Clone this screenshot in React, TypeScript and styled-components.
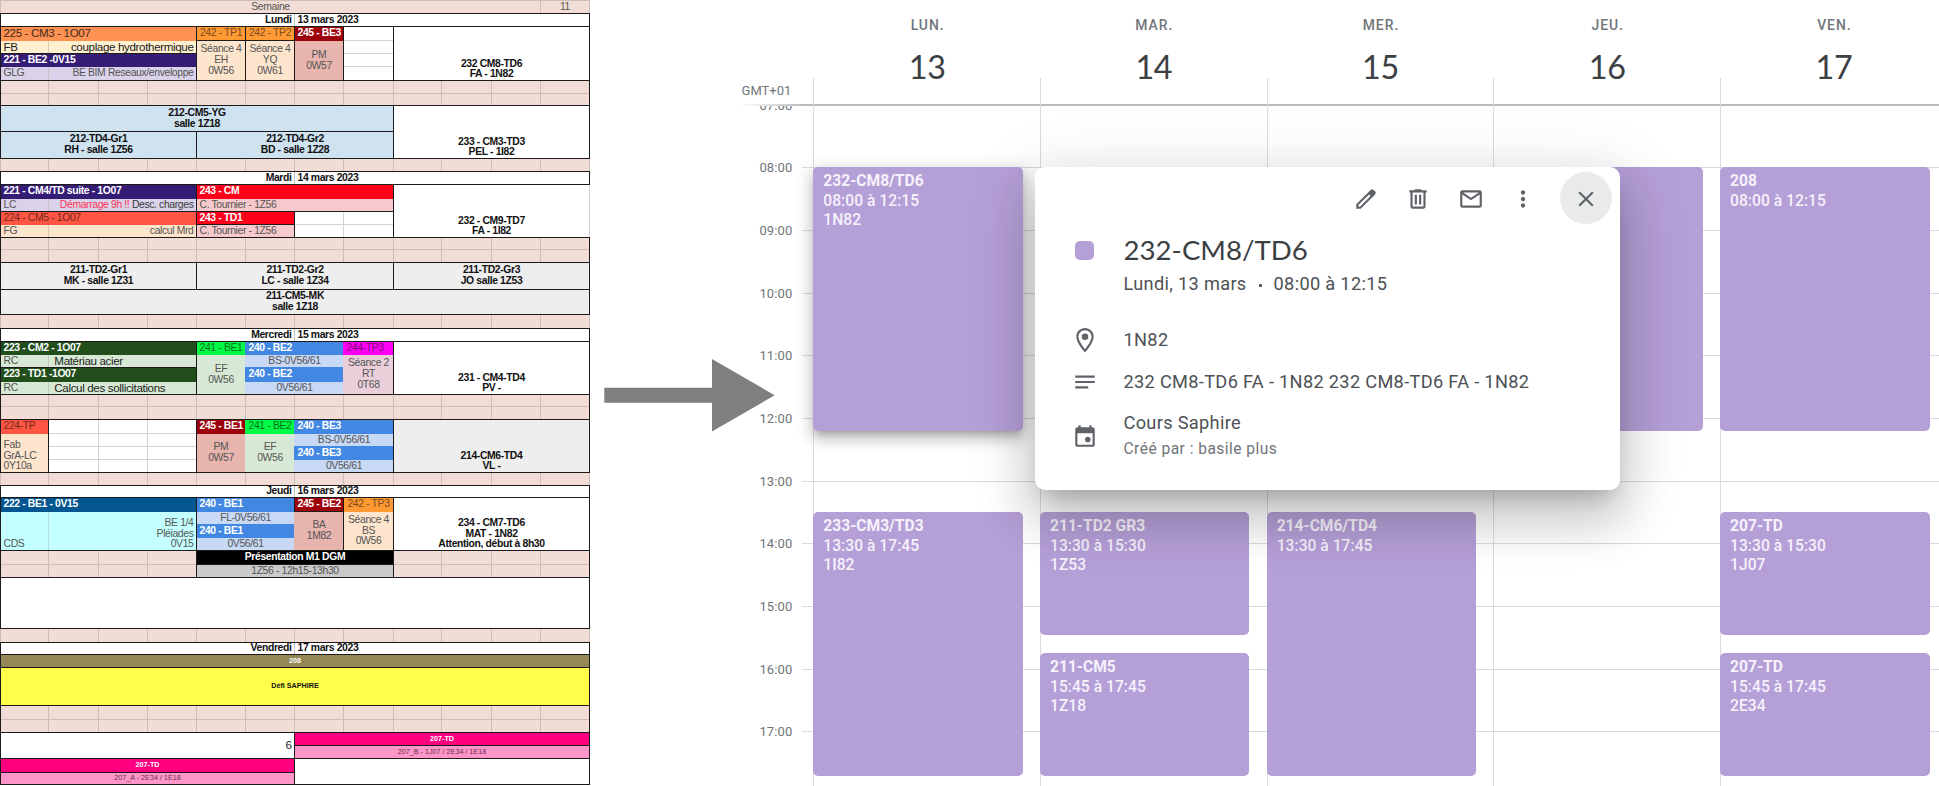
import React from 'react';
import styled, { createGlobalStyle, css } from 'styled-components';

const GlobalStyle = createGlobalStyle`
  * { box-sizing: border-box; }
  body { margin: 0; background: #fff; overflow: hidden; }
`;

const Page = styled.main`
  display: flex;
  width: 1939px;
  height: 786px;
  overflow: hidden;
  background: #fff;
`;

/* ---------- Spreadsheet ---------- */

const COLUMN_LINES = [0, 48, 98, 147, 196, 245, 294, 343, 393, 441, 491, 540, 589];
const ROW_LINES = [
  0, 13, 26, 40, 53, 66, 80, 93, 105, 131, 158,
  171, 184, 198, 211, 224, 237, 249, 262, 289, 314,
  328, 341, 354, 367, 381, 394, 406, 419, 433, 446, 459, 472,
  485, 497, 511, 524, 537, 550, 564, 577, 628,
  642, 654, 667, 705, 719, 732, 745, 758, 772, 784,
];
const tracks = (lines: number[]) =>
  lines.slice(1).map((l, i) => `${l - lines[i]}px`).join(' ');

const Sheet = styled.section`
  flex: none;
  display: grid;
  width: 590px;
  height: 786px;
  grid-template-columns: ${tracks(COLUMN_LINES)};
  grid-template-rows: ${tracks(ROW_LINES)};
  font-family: "Liberation Sans", Arial, sans-serif;
  line-height: 10.7px;
  color: #111;
`;

type Span = { $c: [number, number]; $r: [number, number] };

const spanned = css<Span>`
  grid-column: ${p => `${p.$c[0]} / ${p.$c[1]}`};
  grid-row: ${p => `${p.$r[0]} / ${p.$r[1]}`};
  margin: 0 -1px -1px 0;
`;

const GridCell = styled.div<Span & { $white?: boolean }>`
  ${spanned}
  background: ${p => (p.$white ? '#fff' : '#f2ddd6')};
  border: 1px solid ${p => (p.$white ? '#d4d4d4' : '#cdbdb6')};
`;

const Frame = styled.div<Span>`
  ${spanned}
  border: 1px solid #1c1a1a;
  z-index: 1;
`;

const DayDivider = styled.div<Span>`
  ${spanned}
  border-left: 1px solid #c4c4c4;
`;

type Align = 'left' | 'center' | 'right';
type TextSize = 'tiny' | 'normal' | 'large';
const SIZES: Record<TextSize, string> = { tiny: '7.2px', normal: '10.4px', large: '11.6px' };
const TRACKING: Record<TextSize, string> = { tiny: '0', normal: '-0.37px', large: '-0.36px' };

const TextCell = styled.div<Span & {
  $bg: string; $fg: string; $align: Align; $size: TextSize; $bold: boolean; $bottom: boolean; $line?: string;
}>`
  ${spanned}
  display: flex;
  flex-direction: column;
  justify-content: ${p => (p.$bottom ? 'flex-end' : 'center')};
  padding: 0 ${p => (p.$align === 'center' ? '0' : '2.5px')};
  overflow: hidden;
  white-space: pre;
  text-align: ${p => p.$align};
  font-size: ${p => SIZES[p.$size]};
  letter-spacing: ${p => TRACKING[p.$size]};
  font-weight: ${p => (p.$bold ? 700 : 400)};
  color: ${p => p.$fg};
  background: ${p => p.$bg};
  border: 1px solid ${p => p.$line ?? p.$bg};
`;

const Warning = styled.span`
  color: #ff3355;
`;

type CellData = {
  c: [number, number];
  r: [number, number];
  t?: React.ReactNode[];
  bg?: string;
  fg?: string;
  align?: Align;
  size?: TextSize;
  bold?: boolean;
  bottom?: boolean;
  line?: string;
};

const PURPLE = '#351c75', LILAC = '#d9d2e9', PEACH = '#fde4cd', ORANGE = '#ff9933', DARKRED = '#9e000b',
  ROSE = '#e8b4ae', SKY = '#cfe2f0', GREY = '#eeeeee', RED = '#ff001a', BLUSH = '#f6c9cc', TOMATO = '#ff5542',
  FOREST = '#214e1b', MINT = '#d7e9d4', GREEN = '#00fa45', BLUE = '#4288e2', PALEBLUE = '#c7d9f5',
  SLATE = '#555', SOFT = '#c9c2c4';

const soft = { fg: SLATE };
const head = { fg: '#fff', bold: true, align: 'left' as Align };
const block = { bold: true };

const days: [number, string, string][] = [
  [2, 'Lundi', '13 mars 2023'],
  [12, 'Mardi', '14 mars 2023'],
  [22, 'Mercredi', '15 mars 2023'],
  [34, 'Jeudi', '16 mars 2023'],
  [43, 'Vendredi', '17 mars 2023'],
];

const CELLS: CellData[] = [
  { c: [1, 12], r: [1, 2], t: ['Semaine'], bg: '#f2ddd6', fg: SLATE, line: '#cdbdb6' },
  { c: [12, 13], r: [1, 2], t: ['11'], bg: '#f2ddd6', fg: SLATE, line: '#cdbdb6' },
  ...days.flatMap(([row, day, date]): CellData[] => [
    { c: [7, 13], r: [row, row + 1], t: [date], align: 'left', bold: true },
    { c: [1, 7], r: [row, row + 1], t: [day], align: 'right', bold: true },
  ]),

  // Monday
  { c: [1, 5], r: [4, 5], t: ['couplage hydrothermique'], bg: '#fff0cf', align: 'right', size: 'large', fg: '#222' },
  { c: [1, 2], r: [4, 5], t: ['FB'], bg: '#fff0cf', align: 'left', size: 'large', fg: '#222', line: '#d8ccb4' },
  { c: [1, 5], r: [3, 4], t: ['225 - CM3 - 1O07'], bg: '#ff9152', align: 'left', size: 'large', fg: '#3d2a20' },
  { c: [1, 5], r: [6, 7], t: ['BE BIM Reseaux/enveloppe'], bg: LILAC, align: 'right', ...soft },
  { c: [1, 2], r: [6, 7], t: ['GLG'], bg: LILAC, align: 'left', ...soft, line: SOFT },
  { c: [1, 5], r: [5, 6], t: ['221 - BE2 -0V15'], bg: PURPLE, ...head },
  { c: [5, 6], r: [4, 7], t: ['Séance 4', 'EH', '0W56'], bg: PEACH, ...soft },
  { c: [6, 7], r: [4, 7], t: ['Séance 4', 'YQ', '0W61'], bg: PEACH, ...soft },
  { c: [7, 8], r: [4, 7], t: ['PM', '0W57'], bg: ROSE, ...soft },
  { c: [5, 6], r: [3, 4], t: ['242 - TP1'], bg: ORANGE, fg: '#7a4a1c' },
  { c: [6, 7], r: [3, 4], t: ['242 - TP2'], bg: ORANGE, fg: '#7a4a1c' },
  { c: [7, 8], r: [3, 4], t: ['245 - BE3'], bg: DARKRED, ...head },
  { c: [9, 13], r: [3, 7], t: ['232 CM8-TD6', 'FA - 1N82'], bottom: true, ...block },
  { c: [1, 9], r: [9, 10], t: ['212-CM5-YG', 'salle 1Z18'], bg: SKY, ...block },
  { c: [1, 5], r: [10, 11], t: ['212-TD4-Gr1', 'RH - salle 1Z56'], bg: SKY, ...block },
  { c: [5, 9], r: [10, 11], t: ['212-TD4-Gr2', 'BD - salle 1Z28'], bg: SKY, ...block },
  { c: [9, 13], r: [9, 11], t: ['233 - CM3-TD3', 'PEL - 1I82'], bottom: true, ...block },

  // Tuesday
  {
    c: [1, 5], r: [14, 15], bg: LILAC, align: 'right', fg: '#3a3a40',
    t: [<span key="d"><Warning>Démarrage 9h !!</Warning> Desc. charges</span>],
  },
  { c: [1, 2], r: [14, 15], t: ['LC'], bg: LILAC, align: 'left', ...soft, line: SOFT },
  { c: [1, 5], r: [13, 14], t: ['221 - CM4/TD suite - 1O07'], bg: PURPLE, ...head },
  { c: [1, 5], r: [16, 17], t: ['calcul Mrd'], bg: PEACH, align: 'right', ...soft },
  { c: [1, 2], r: [16, 17], t: ['FG'], bg: PEACH, align: 'left', ...soft, line: '#d8c8b8' },
  { c: [1, 5], r: [15, 16], t: ['224 - CM5 - 1O07'], bg: TOMATO, align: 'left', fg: '#6f2a20' },
  { c: [5, 9], r: [14, 15], t: ['C. Tournier - 1Z56'], bg: BLUSH, align: 'left', ...soft },
  { c: [5, 9], r: [13, 14], t: ['243 - CM'], bg: RED, ...head },
  { c: [5, 7], r: [16, 17], t: ['C. Tournier - 1Z56'], bg: BLUSH, align: 'left', ...soft },
  { c: [5, 7], r: [15, 16], t: ['243 - TD1'], bg: RED, ...head },
  { c: [9, 13], r: [13, 17], t: ['232 - CM9-TD7', 'FA - 1I82'], bottom: true, ...block, line: '#d4d4d4' },
  { c: [1, 5], r: [19, 20], t: ['211-TD2-Gr1', 'MK - salle 1Z31'], bg: GREY, ...block },
  { c: [5, 9], r: [19, 20], t: ['211-TD2-Gr2', 'LC - salle 1Z34'], bg: GREY, ...block },
  { c: [9, 13], r: [19, 20], t: ['211-TD2-Gr3', 'JO salle 1Z53'], bg: GREY, ...block },
  { c: [1, 13], r: [20, 21], t: ['211-CM5-MK', 'salle 1Z18'], bg: GREY, ...block },

  // Wednesday
  { c: [2, 5], r: [24, 25], t: [' Matériau acier'], bg: MINT, align: 'left', size: 'large', fg: '#222' },
  { c: [1, 2], r: [24, 25], t: ['RC'], bg: MINT, align: 'left', ...soft, line: '#bfcbbc' },
  { c: [2, 5], r: [26, 27], t: [' Calcul des sollicitations'], bg: MINT, align: 'left', size: 'large', fg: '#222' },
  { c: [1, 2], r: [26, 27], t: ['RC'], bg: MINT, align: 'left', ...soft, line: '#bfcbbc' },
  { c: [1, 5], r: [23, 24], t: ['223 - CM2 - 1O07'], bg: FOREST, ...head },
  { c: [1, 5], r: [25, 26], t: ['223 - TD1 -1O07'], bg: FOREST, ...head },
  { c: [5, 6], r: [24, 27], t: ['EF', '0W56'], bg: MINT, ...soft },
  { c: [5, 6], r: [23, 24], t: ['241 - BE1'], bg: GREEN, fg: '#08701f' },
  { c: [6, 8], r: [24, 25], t: ['BS-0V56/61'], bg: PALEBLUE, ...soft },
  { c: [6, 8], r: [26, 27], t: ['0V56/61'], bg: PALEBLUE, ...soft },
  { c: [6, 8], r: [23, 24], t: ['240 - BE2'], bg: BLUE, ...head },
  { c: [6, 8], r: [25, 26], t: ['240 - BE2'], bg: BLUE, ...head },
  { c: [8, 9], r: [24, 27], t: ['Séance 2', 'RT', '0T68'], bg: '#eacfda', ...soft },
  { c: [8, 9], r: [23, 24], t: ['244-TP3'], bg: '#ff00f7', align: 'left', fg: '#7a0f74' },
  { c: [9, 13], r: [23, 27], t: ['231 - CM4-TD4', 'PV -'], bottom: true, ...block },
  { c: [1, 2], r: [30, 33], t: ['Fab', 'GrA-LC', '0Y10a'], bg: PEACH, align: 'left', bottom: true, ...soft },
  { c: [1, 2], r: [29, 30], t: ['224-TP'], bg: TOMATO, align: 'left', fg: '#6f2a20' },
  { c: [5, 6], r: [30, 33], t: ['PM', '0W57'], bg: ROSE, ...soft },
  { c: [5, 6], r: [29, 30], t: ['245 - BE1'], bg: DARKRED, ...head },
  { c: [6, 7], r: [30, 33], t: ['EF', '0W56'], bg: MINT, ...soft },
  { c: [6, 7], r: [29, 30], t: ['241 - BE2'], bg: GREEN, fg: '#08701f' },
  { c: [7, 9], r: [30, 31], t: ['BS-0V56/61'], bg: PALEBLUE, ...soft },
  { c: [7, 9], r: [32, 33], t: ['0V56/61'], bg: PALEBLUE, ...soft },
  { c: [7, 9], r: [29, 30], t: ['240 - BE3'], bg: BLUE, ...head },
  { c: [7, 9], r: [31, 32], t: ['240 - BE3'], bg: BLUE, ...head },
  { c: [9, 13], r: [29, 33], t: ['214-CM6-TD4', 'VL -'], bg: GREY, bottom: true, ...block },

  // Thursday
  { c: [1, 5], r: [36, 39], t: ['BE 1/4', 'Pléiades', '0V15'], bg: '#c4ffff', align: 'right', bottom: true, ...soft },
  { c: [1, 2], r: [36, 39], t: ['CDS'], bg: '#c4ffff', align: 'left', bottom: true, ...soft, line: '#b3dedd' },
  { c: [1, 5], r: [35, 36], t: ['222 - BE1 - 0V15'], bg: '#045691', ...head },
  { c: [5, 7], r: [36, 37], t: ['FL-0V56/61'], bg: PALEBLUE, ...soft },
  { c: [5, 7], r: [38, 39], t: ['0V56/61'], bg: PALEBLUE, ...soft },
  { c: [5, 7], r: [35, 36], t: ['240 - BE1'], bg: BLUE, ...head },
  { c: [5, 7], r: [37, 38], t: ['240 - BE1'], bg: BLUE, ...head },
  { c: [7, 8], r: [36, 39], t: ['BA', '1M82'], bg: ROSE, ...soft },
  { c: [8, 9], r: [36, 39], t: ['Séance 4', 'BS', '0W56'], bg: PEACH, ...soft },
  { c: [7, 8], r: [35, 36], t: ['245 - BE2'], bg: DARKRED, ...head },
  { c: [8, 9], r: [35, 36], t: ['242 - TP3'], bg: ORANGE, fg: '#7a4a1c' },
  { c: [9, 13], r: [35, 39], t: ['234 - CM7-TD6', 'MAT - 1N82', 'Attention, début à 8h30'], bottom: true, ...block },
  { c: [5, 9], r: [40, 41], t: ['1Z56 - 12h15-13h30'], bg: '#cacaca', ...soft },
  { c: [5, 9], r: [39, 40], t: ['Présentation M1 DGM'], bg: '#000', fg: '#fff', bold: true },
  { c: [1, 13], r: [41, 42] },

  // Friday
  { c: [1, 13], r: [44, 45], t: ['208'], bg: '#938856', fg: '#fff', bold: true, size: 'tiny' },
  { c: [1, 13], r: [45, 46], t: ['Défi SAPHIRE'], bg: '#ffff4a', bold: true, size: 'tiny' },
  { c: [1, 7], r: [48, 50], t: ['6'], align: 'right', size: 'large', fg: '#222' },
  { c: [7, 13], r: [49, 50], t: ['207_B - 1J07 / 2E34 / 1E18'], bg: '#ff96c9', fg: '#6b2a4c', size: 'tiny' },
  { c: [7, 13], r: [48, 49], t: ['207-TD'], bg: '#ff0080', fg: '#fff', bold: true, size: 'tiny' },
  { c: [1, 7], r: [51, 52], t: ['207_A - 2E34 / 1E18'], bg: '#ff96c9', fg: '#6b2a4c', size: 'tiny' },
  { c: [1, 7], r: [50, 51], t: ['207-TD'], bg: '#ff0080', fg: '#fff', bold: true, size: 'tiny' },
  { c: [7, 13], r: [50, 52] },
];

const SPACER_ROWS = [7, 8, 11, 17, 18, 21, 27, 28, 33, 39, 40, 42, 46, 47];

// [first column, last column, first row, last row]
const FRAMES: [number, number, number, number][] = [
  [1, 13, 2, 11], [1, 13, 2, 3], [1, 13, 3, 7],
  [1, 5, 3, 5], [1, 5, 5, 7], [5, 6, 3, 7], [6, 7, 3, 7], [5, 6, 3, 4], [6, 7, 3, 4], [8, 9, 3, 7], [9, 13, 3, 7],
  [1, 9, 9, 10], [1, 5, 10, 11], [5, 9, 10, 11], [9, 13, 9, 11],
  [1, 13, 12, 13], [1, 5, 13, 15], [1, 5, 15, 17], [5, 9, 13, 15], [5, 7, 15, 16], [5, 7, 15, 17], [7, 9, 15, 17],
  [1, 13, 17, 19], [1, 5, 19, 20], [5, 9, 19, 20], [9, 13, 19, 20], [1, 13, 20, 21],
  [1, 13, 22, 33], [1, 13, 22, 23], [1, 5, 23, 25], [1, 5, 25, 27], [5, 9, 23, 27], [9, 13, 23, 27],
  [1, 2, 29, 33], [2, 5, 29, 33], [5, 9, 29, 33], [9, 13, 29, 33],
  [1, 13, 34, 42], [1, 13, 34, 35], [1, 5, 35, 39], [5, 9, 35, 39], [9, 13, 35, 39], [7, 8, 35, 36], [8, 9, 35, 39],
  [5, 9, 39, 40], [5, 9, 39, 41], [1, 13, 41, 42],
  [1, 13, 43, 52], [1, 13, 43, 44], [1, 13, 44, 45], [1, 13, 45, 46],
  [1, 7, 48, 50], [7, 13, 48, 49], [7, 13, 49, 50], [1, 7, 50, 51], [1, 7, 51, 52], [7, 13, 50, 52],
];

const whiteArea = (c0: number, c1: number, r0: number, r1: number) => {
  const out: [number, number][] = [];
  for (let r = r0; r < r1; r++) for (let c = c0; c < c1; c++) out.push([c, r]);
  return out;
};
const WHITE_CELLS = [...whiteArea(8, 9, 3, 7), ...whiteArea(7, 9, 15, 17), ...whiteArea(2, 5, 29, 33)];

function CourseSheet() {
  return (
    <Sheet>
      {SPACER_ROWS.flatMap(r =>
        Array.from({ length: 12 }, (_, i) => <GridCell key={`${r}-${i}`} $c={[i + 1, i + 2]} $r={[r, r + 1]} />),
      )}
      {WHITE_CELLS.map(([c, r]) => <GridCell key={`w${r}-${c}`} $white $c={[c, c + 1]} $r={[r, r + 1]} />)}
      {CELLS.map((d, i) => (
        <TextCell
          key={i} $c={d.c} $r={d.r} $bg={d.bg ?? '#fff'} $fg={d.fg ?? '#111'} $align={d.align ?? 'center'}
          $size={d.size ?? 'normal'} $bold={!!d.bold} $bottom={!!d.bottom} $line={d.line}
        >
          {d.t?.map((line, j) => <div key={j}>{line}</div>)}
        </TextCell>
      ))}
      {days.map(([r]) => <DayDivider key={r} $c={[7, 8]} $r={[r, r + 1]} />)}
      {FRAMES.map(([c0, c1, r0, r1], i) => <Frame key={i} $c={[c0, c1]} $r={[r0, r1]} />)}
    </Sheet>
  );
}

/* ---------- Arrow ---------- */

const ArrowGap = styled.div`
  flex: none;
  width: 150px;
  padding: 359px 0 0 14px;
  position: relative;
  z-index: 2;
  svg { display: block; overflow: visible; }
`;

/* ---------- Calendar ---------- */

const Calendar = styled.section`
  flex: 1;
  position: relative;
  display: flex;
  flex-direction: column;
  overflow: visible;
  font-family: Roboto, sans-serif;
`;

const CalendarHeader = styled.header`
  position: relative;
  z-index: 1;
  flex: none;
  display: grid;
  grid-template-columns: 73.3px repeat(5, 226.7px);
  height: 106px;
  background: linear-gradient(to right, rgba(183, 186, 188, 0), #b9bcbe 63px) bottom / 100% 2px no-repeat, #fff;
`;

const Zone = styled.div`
  align-self: end;
  justify-self: end;
  margin-right: 22px;
  padding-bottom: 7px;
  font-size: 13px;
  line-height: 16px;
  color: #70757a;
`;

const DayHead = styled.div`
  display: flex;
  flex-direction: column;
  align-items: center;
  padding-top: 15px;
  background: linear-gradient(#dadce0, #dadce0) left bottom / 1px 28px no-repeat;
`;

const DayName = styled.div`
  padding-left: 2px;
  font-size: 13.9px;
  font-weight: 500;
  line-height: 20px;
  letter-spacing: 1px;
  color: #70757a;
`;

const DayNumber = styled.div`
  margin-top: 12px;
  padding-left: 1px;
  font: 400 32.3px/40px Lato, sans-serif;
  letter-spacing: -0.3px;
  color: #3c4043;
`;

const HOUR = 62.69;

const CalendarBody = styled.div`
  flex: 1;
  display: grid;
  grid-template-columns: 62px 11.3px 1fr;
  grid-template-rows: 1fr;
  margin-top: -1.4px;
  min-height: 0;
`;

const HourLabels = styled.div`
  grid-area: 1 / 1;
  display: flex;
  flex-direction: column;
  margin-top: -8px;
`;

const HourLabel = styled.div`
  flex: none;
  height: ${HOUR}px;
  padding-right: 9.5px;
  text-align: right;
  font-size: 13px;
  line-height: 17px;
  letter-spacing: 0.15px;
  color: #70757a;
`;

const HourLines = styled.div`
  grid-area: 1 / 2 / 2 / 4;
`;

const HourLine = styled.div`
  height: ${HOUR}px;
  border-top: 1px solid #d9dbe0;
`;

const DayColumns = styled.div`
  grid-area: 1 / 3;
  display: grid;
  grid-template-columns: repeat(5, 226.7px);
`;

const DayColumn = styled.div`
  display: grid;
  grid-template-rows: repeat(43, ${HOUR / 4}px);
  background: linear-gradient(#dadce0, #dadce0) left / 1px 100% no-repeat;
`;

const Event = styled.article<{ $from: number; $to: number; $raised?: boolean }>`
  grid-column: 1;
  grid-row: ${p => `${(p.$from - 7) * 4 + 1} / ${(p.$to - 7) * 4 + 1}`};
  width: 209.5px;
  margin-bottom: 2.7px;
  padding: 5px 10px;
  border-radius: 5px;
  background: #b59fd7;
  font-size: 15.6px;
  font-weight: 500;
  line-height: 19.5px;
  letter-spacing: 0.04px;
  color: #f6f2fb;
  ${p => p.$raised && css`
    box-shadow: 0 8px 13px 1px rgba(0, 0, 0, 0.14), 0 4px 18px 3px rgba(0, 0, 0, 0.12), 0 6px 7px -4px rgba(0, 0, 0, 0.2);
  `}
`;

const EventTitle = styled.div`
  font-weight: 700;
  letter-spacing: 0;
`;

type EventData = { title: string; from: number; to: number; time: string; room?: string; raised?: boolean };

const WEEK: { name: string; date: number; events: EventData[] }[] = [
  {
    name: 'LUN.', date: 13, events: [
      { title: '232-CM8/TD6', from: 8, to: 12.25, time: '08:00 à 12:15', room: '1N82', raised: true },
      { title: '233-CM3/TD3', from: 13.5, to: 17.75, time: '13:30 à 17:45', room: '1I82' },
    ],
  },
  {
    name: 'MAR.', date: 14, events: [
      { title: '211-TD2 GR3', from: 13.5, to: 15.5, time: '13:30 à 15:30', room: '1Z53' },
      { title: '211-CM5', from: 15.75, to: 17.75, time: '15:45 à 17:45', room: '1Z18' },
    ],
  },
  { name: 'MER.', date: 15, events: [{ title: '214-CM6/TD4', from: 13.5, to: 17.75, time: '13:30 à 17:45' }] },
  { name: 'JEU.', date: 16, events: [{ title: '', from: 8, to: 12.25, time: '' }] },
  {
    name: 'VEN.', date: 17, events: [
      { title: '208', from: 8, to: 12.25, time: '08:00 à 12:15' },
      { title: '207-TD', from: 13.5, to: 15.5, time: '13:30 à 15:30', room: '1J07' },
      { title: '207-TD', from: 15.75, to: 17.75, time: '15:45 à 17:45', room: '2E34' },
    ],
  },
];

const HOURS = ['07:00', '08:00', '09:00', '10:00', '11:00', '12:00', '13:00', '14:00', '15:00', '16:00', '17:00'];

/* ---------- Event popup ---------- */

const Popup = styled.aside`
  position: absolute;
  z-index: 2;
  left: 295px;
  top: 167px;
  width: 585px;
  height: 322.5px;
  padding-top: 5px;
  border-radius: 10px;
  background: #fff;
  box-shadow: 0 31px 49px 4px rgba(0, 0, 0, 0.14), 0 12px 60px 10px rgba(0, 0, 0, 0.12),
    0 14px 20px -9px rgba(0, 0, 0, 0.2);
  color: #4d5155;
`;

const Toolbar = styled.div`
  display: flex;
  justify-content: flex-end;
  padding-right: 8px;
`;

const IconButton = styled.button<{ $active?: boolean }>`
  display: flex;
  align-items: center;
  justify-content: center;
  width: 52.2px;
  height: 52px;
  margin: 0 0 0 ${p => (p.$active ? '11px' : '0')};
  padding: 2px 0 0;
  border: 0;
  border-radius: 50%;
  background: ${p => (p.$active ? '#e9ebeb' : 'transparent')};
`;

const DetailRow = styled.div<{ $gap: number; $height: number }>`
  display: grid;
  grid-template-columns: 26px 1fr;
  column-gap: 26px;
  align-items: center;
  justify-items: start;
  margin: ${p => p.$gap}px 0 0 36.5px;
  height: ${p => p.$height}px;
  font-size: 18.2px;
  line-height: 26px;
  letter-spacing: 0.32px;
`;

const Swatch = styled.span`
  justify-self: center;
  width: 19px;
  height: 19px;
  border-radius: 5px;
  background: #b59fd7;
`;

const Title = styled.h1`
  margin: 0;
  font: 400 27.6px/38px Lato, sans-serif;
  letter-spacing: 0.03px;
  color: #3c4043;
`;

const When = styled.div`
  grid-column: 2;
  display: flex;
  align-items: center;
`;

const Dot = styled.span`
  width: 3px;
  height: 3px;
  margin: 3px 12px 0;
  border-radius: 1px;
  background: #4d5155;
`;

const Author = styled.div`
  font-size: 15.6px;
  letter-spacing: 0.45px;
  color: #70757a;
`;

const Svg = styled.svg`
  display: block;
  width: 26px;
  height: 26px;
  fill: #5f6368;
`;

const ICONS = {
  edit: 'M20.41 4.94l-1.35-1.35c-.78-.78-2.05-.78-2.83 0L3 16.82V21h4.18L20.41 7.77c.79-.78.79-2.05 0-2.83zm-14 14.12L5 19v-1.36l9.82-9.82 1.41 1.41-9.82 9.83z',
  trash: 'M15 4V3H9v1H4v2h1v13c0 1.1.9 2 2 2h10c1.1 0 2-.9 2-2V6h1V4h-5zm2 15H7V6h10v13zM9 8h2v9H9zm4 0h2v9h-2z',
  mail: 'M20 4H4c-1.1 0-2 .9-2 2v12c0 1.1.9 2 2 2h16c1.1 0 2-.9 2-2V6c0-1.1-.9-2-2-2zm-.8 2L12 10.8 4.8 6h14.4zM4 18V7.87l8 5.33 8-5.33V18H4z',
  more: 'M12 8c1.1 0 2-.9 2-2s-.9-2-2-2-2 .9-2 2 .9 2 2 2zm0 2c-1.1 0-2 .9-2 2s.9 2 2 2 2-.9 2-2-.9-2-2-2zm0 6c-1.1 0-2 .9-2 2s.9 2 2 2 2-.9 2-2-.9-2-2-2z',
  close: 'M19 6.41L17.59 5 12 10.59 6.41 5 5 6.41 10.59 12 5 17.59 6.41 19 12 13.41 17.59 19 19 17.59 13.41 12z',
  pin: 'M12 1C7.59 1 4 4.59 4 9c0 5.57 6.96 13.34 7.26 13.67l.74.82.74-.82C13.04 22.34 20 14.57 20 9c0-4.41-3.59-8-8-8zm0 19.47C9.82 17.86 6 12.54 6 9c0-3.31 2.69-6 6-6s6 2.69 6 6c0 3.83-4.25 9.36-6 11.47zM12 6a3 3 0 1 0 0 6 3 3 0 0 0 0-6z',
  notes: 'M3 6h18v2H3zM3 11h18v2H3zM3 16h12v2H3z',
  calendar: 'M19 4h-1V2h-2v2H8V2H6v2H5c-1.1 0-2 .9-2 2v14c0 1.1.9 2 2 2h14c1.1 0 2-.9 2-2V6c0-1.1-.9-2-2-2zm0 16H5V9.5h14V20zM14.6 12.6a2.6 2.6 0 1 0 0 5.2 2.6 2.6 0 0 0 0-5.2z',
};

const Icon = ({ name }: { name: keyof typeof ICONS }) => (
  <Svg viewBox="0 0 24 24" aria-hidden><path d={ICONS[name]} /></Svg>
);

function EventPopup() {
  return (
    <Popup>
      <Toolbar>
        <IconButton><Icon name="edit" /></IconButton>
        <IconButton><Icon name="trash" /></IconButton>
        <IconButton><Icon name="mail" /></IconButton>
        <IconButton><Icon name="more" /></IconButton>
        <IconButton $active><Icon name="close" /></IconButton>
      </Toolbar>
      <DetailRow $gap={7} $height={38}><Swatch /><Title>232-CM8/TD6</Title></DetailRow>
      <DetailRow $gap={2} $height={26}>
        <When><span>Lundi, 13 mars</span><Dot /><span>08:00 à 12:15</span></When>
      </DetailRow>
      <DetailRow $gap={22} $height={42}><Icon name="pin" /><span>1N82</span></DetailRow>
      <DetailRow $gap={0} $height={41}>
        <Icon name="notes" /><span>232 CM8-TD6 FA - 1N82 232 CM8-TD6 FA - 1N82</span>
      </DetailRow>
      <DetailRow $gap={8} $height={52}>
        <Icon name="calendar" />
        <div><div>Cours Saphire</div><Author>Créé par : basile plus</Author></div>
      </DetailRow>
    </Popup>
  );
}

export default function App() {
  return (
    <Page>
      <GlobalStyle />
      <CourseSheet />
      <ArrowGap>
        <svg width="171" height="73" viewBox="0 0 171 73">
          <path d="M.3 28.7H108V0l62.7 36.3L108 72.4V43.7H.3z" fill="#7f7f7f" />
        </svg>
      </ArrowGap>
      <Calendar>
        <CalendarHeader>
          <Zone>GMT+01</Zone>
          {WEEK.map(d => (
            <DayHead key={d.date}><DayName>{d.name}</DayName><DayNumber>{d.date}</DayNumber></DayHead>
          ))}
        </CalendarHeader>
        <CalendarBody>
          <HourLabels>{HOURS.map(h => <HourLabel key={h}>{h}</HourLabel>)}</HourLabels>
          <HourLines>{HOURS.map(h => <HourLine key={h} />)}</HourLines>
          <DayColumns>
            {WEEK.map(d => (
              <DayColumn key={d.date}>
                {d.events.map(e => (
                  <Event key={e.from} $from={e.from} $to={e.to} $raised={e.raised}>
                    <EventTitle>{e.title}</EventTitle>
                    <div>{e.time}</div>
                    {e.room && <div>{e.room}</div>}
                  </Event>
                ))}
              </DayColumn>
            ))}
          </DayColumns>
        </CalendarBody>
        <EventPopup />
      </Calendar>
    </Page>
  );
}
